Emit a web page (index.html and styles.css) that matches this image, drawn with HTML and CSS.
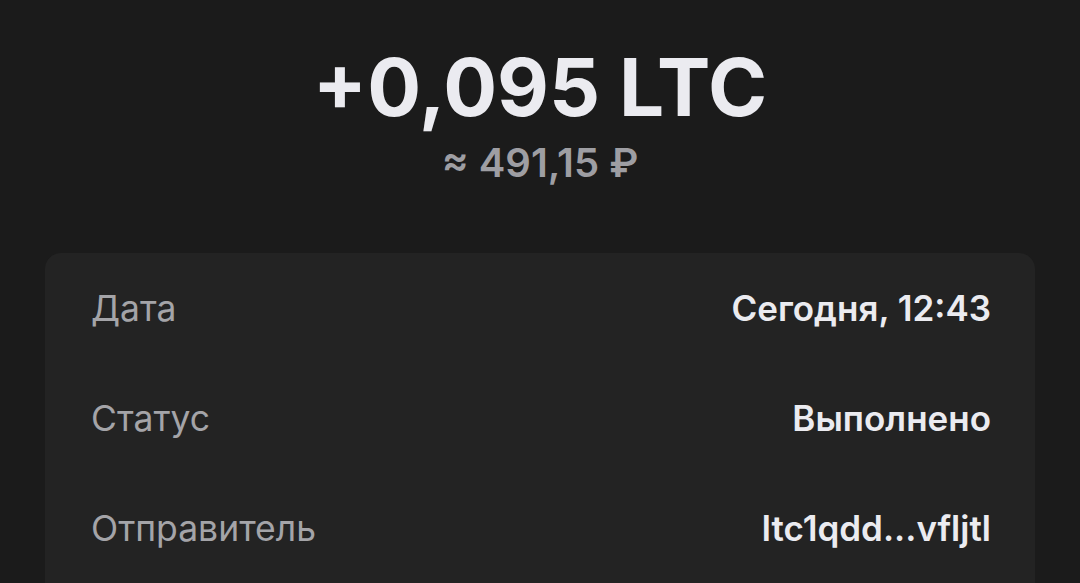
FILE: index.html
```html
<!DOCTYPE html>
<html lang="ru">
<head>
    <meta charset="UTF-8">
    <meta name="viewport" content="width=device-width, initial-scale=1.0">
    <title>Транзакция</title>
    <link rel="stylesheet" href="styles.css">
</head>
<body>
    <header class="amount">
        <h1 class="amount-main">+0,095 LTC</h1>
        <p class="amount-fiat">≈ 491,15 ₽</p>
    </header>

    <main class="details">
        <div class="row">
            <span class="label">Дата</span>
            <span class="value">Сегодня, 12:43</span>
        </div>
        <div class="row">
            <span class="label">Статус</span>
            <span class="value">Выполнено</span>
        </div>
        <div class="row">
            <span class="label">Отправитель</span>
            <span class="value">ltc1qdd...vfljtl</span>
        </div>
    </main>
</body>
</html>
```

FILE: styles.css
```css
body {
    margin: 0;
    padding: 47px 45px 0 45px;
    background-color: #1b1b1b;
    font-family: Inter, "Noto Sans", sans-serif;
    height: 536px;
    overflow: hidden;
}

.amount {
    text-align: center;
    margin-bottom: 70px;
}

.amount-main {
    margin: 0;
    font-size: 80px;
    line-height: 80px;
    font-weight: 700;
    color: #ebebf0;
}

.amount-fiat {
    margin: 16px 0 0 0;
    font-size: 40px;
    line-height: 40px;
    font-weight: 600;
    color: #9e9ea3;
}

.details {
    background-color: #232323;
    border-radius: 16px;
    padding: 0 44px 0 46px;
    height: 400px;
}

.row {
    display: flex;
    justify-content: space-between;
    align-items: center;
    height: 110px;
    font-size: 35px;
    line-height: 35px;
}

.label {
    color: #a4a4a8;
    font-size: 35.5px;
}

.value {
    color: #ebebf0;
    font-weight: 600;
}
```
